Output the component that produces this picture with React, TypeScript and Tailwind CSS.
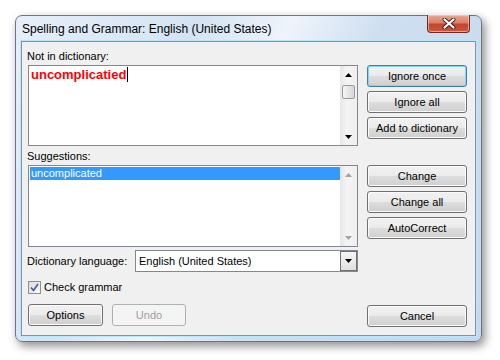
import React from "react";

const ui = { fontFamily: '"Liberation Sans", Arial, sans-serif' };

function VistaButton({
	label,
	isDefault = false,
	disabled = false,
	className = "",
}: {
	label: string;
	isDefault?: boolean;
	disabled?: boolean;
	className?: string;
}) {
	if (disabled) {
		return (
			<div
				className={`h-[22px] flex items-center justify-center rounded-[3px] border border-[#adb2b5] bg-[#f4f4f4] text-[11px] text-[#a0a0a0] ${className}`}
			>
				{label}
			</div>
		);
	}
	return (
		<div
			className={`h-[22px] flex items-center justify-center rounded-[3px] border text-[11px] text-black bg-[linear-gradient(#f2f2f2_0%,#ebebeb_48%,#dddddd_52%,#cfcfcf_100%)] ${
				isDefault
					? "border-[#3c7fb1] shadow-[inset_0_0_0_1px_#7fd7f5]"
					: "border-[#707070] shadow-[inset_0_0_0_1px_#fbfbfb]"
			} ${className}`}
		>
			{label}
		</div>
	);
}

function ScrollArrow({ dir, muted = false }: { dir: "up" | "down"; muted?: boolean }) {
	const fill = muted ? "#a3a3a3" : "#000";
	return (
		<div className="h-[17px] flex items-center justify-center">
			<svg width="7" height="4" viewBox="0 0 7 4">
				{dir === "up" ? (
					<path d="M3.5 0 L7 4 L0 4 Z" fill={fill} />
				) : (
					<path d="M0 0 L7 0 L3.5 4 Z" fill={fill} />
				)}
			</svg>
		</div>
	);
}

function Scrollbar({ thumb = false, muted = false }: { thumb?: boolean; muted?: boolean }) {
	return (
		<div className="w-[17px] flex flex-col bg-[linear-gradient(to_right,#e6e6e6,#f4f4f4_40%,#f0f0f0)]">
			<ScrollArrow dir="up" muted={muted} />
			<div className="flex-1 px-[2px]">
				{thumb && (
					<div className="mt-[2px] h-[14px] rounded-[2px] border border-[#9a9a9a] bg-[linear-gradient(to_right,#f6f6f6,#e4e4e4_50%,#d8d8d8)]" />
				)}
			</div>
			<ScrollArrow dir="down" muted={muted} />
		</div>
	);
}

function CloseButton() {
	return (
		<div className="-mt-px mr-[6px] ml-auto w-[43px] h-[18px] rounded-b-[4px] border border-[#6e2a20] border-t-0 bg-[linear-gradient(#e8a797_0%,#d9806c_45%,#c2452c_55%,#c9583f_100%)] shadow-[inset_0_0_0_1px_rgba(255,220,210,0.55)] flex items-center justify-center">
			<svg width="14" height="11" viewBox="0 0 14 11">
				<path d="M2.5 1.5 L11.5 9.5 M11.5 1.5 L2.5 9.5" stroke="#4a1a12" strokeWidth="4" strokeLinecap="round" />
				<path d="M2.5 1.5 L11.5 9.5 M11.5 1.5 L2.5 9.5" stroke="#ffffff" strokeWidth="2.2" strokeLinecap="round" />
			</svg>
		</div>
	);
}

function CheckBox() {
	return (
		<div className="w-[13px] h-[13px] border border-[#8e8f8f] bg-[linear-gradient(135deg,#dcdcdc,#f8f8f8)] flex items-center justify-center">
			<svg width="9" height="9" viewBox="0 0 9 9">
				<path d="M1 4.5 L3.5 7.5 L8 1" stroke="#3a5a9c" strokeWidth="1.6" fill="none" />
			</svg>
		</div>
	);
}

export default function App() {
	return (
		<div className="w-[500px] h-[360px] bg-white pt-[15px] pl-[15px]" style={ui}>
			<div className="w-[467px] h-[327px] rounded-[7px] border border-[#6a7788] flex flex-col px-[5px] pb-[5px] bg-[linear-gradient(115deg,#e6eff9_0%,#d4e3f4_30%,#eef4fb_45%,#cfdff1_60%,#c5d8ee_100%)] shadow-[3px_4px_10px_rgba(0,0,0,0.45)]">
				{/* title bar */}
				<div className="h-[25px] flex items-start">
					<div className="pl-px pt-[4px] text-[12px] text-black">
						Spelling and Grammar: English (United States)
					</div>
					<CloseButton />
				</div>

				{/* client area */}
				<div className="flex-1 flex border border-[#8293a8] bg-[#f0f0f0] pl-[6px] pr-[8px] pt-[8px] pb-[8px] shadow-[0_0_0_1px_#b9e6fb] text-[11px] text-black">
					<div className="w-[330px] flex flex-col">
						<div className="h-[13px] leading-[13px] -ml-px">Not in dictionary:</div>
						<div className="mt-[2px] h-[81px] border border-[#828790] bg-white flex">
							<div className="flex-1 pl-[2px] pt-[1px] flex items-start">
								<span className="text-[13px] font-bold text-[#ff0000] leading-[15px]">uncomplicatied</span>
								<span className="w-px h-[15px] bg-black ml-px" />
							</div>
							<Scrollbar thumb />
						</div>

						<div className="mt-[4px] h-[13px] leading-[13px] -ml-px">Suggestions:</div>
						<div className="mt-[2px] h-[82px] border border-[#828790] bg-white flex">
							<div className="flex-1 pl-px pt-px">
								<div className="h-[13px] leading-[13px] bg-[#3399ff] text-white pl-px">uncomplicated</div>
							</div>
							<Scrollbar muted />
						</div>

						<div className="mt-[3px] h-[22px] flex items-center">
							<div className="w-[108px] -ml-px">Dictionary language:</div>
							<div className="flex-1 h-[22px] border border-[#828790] bg-white flex items-center">
								<div className="flex-1 pl-[3px]">English (United States)</div>
								<div className="w-[17px] h-[20px] border border-[#707070] bg-[linear-gradient(#f6f6f6,#e0e0e0)] flex items-center justify-center">
									<svg width="7" height="4" viewBox="0 0 7 4">
										<path d="M0 0 L7 0 L3.5 4 Z" fill="#000" />
									</svg>
								</div>
							</div>
						</div>

						<div className="mt-[9px] h-[13px] flex items-center gap-[3px]">
							<CheckBox />
							<span className="leading-[13px]">Check grammar</span>
						</div>

						<div className="mt-[10px] flex gap-[9px]">
							<VistaButton label="Options" className="w-[75px]" />
							<VistaButton label="Undo" disabled className="w-[74px]" />
						</div>
					</div>

					<div className="ml-[9px] w-[100px] flex flex-col">
						<div className="mt-[15px] flex flex-col gap-[4px]">
							<VistaButton label="Ignore once" isDefault />
							<VistaButton label="Ignore all" />
							<VistaButton label="Add to dictionary" />
						</div>
						<div className="mt-[26px] flex flex-col gap-[4px]">
							<VistaButton label="Change" />
							<VistaButton label="Change all" />
							<VistaButton label="AutoCorrect" />
						</div>
						<VistaButton label="Cancel" className="mt-auto" />
					</div>
				</div>
			</div>
		</div>
	);
}
